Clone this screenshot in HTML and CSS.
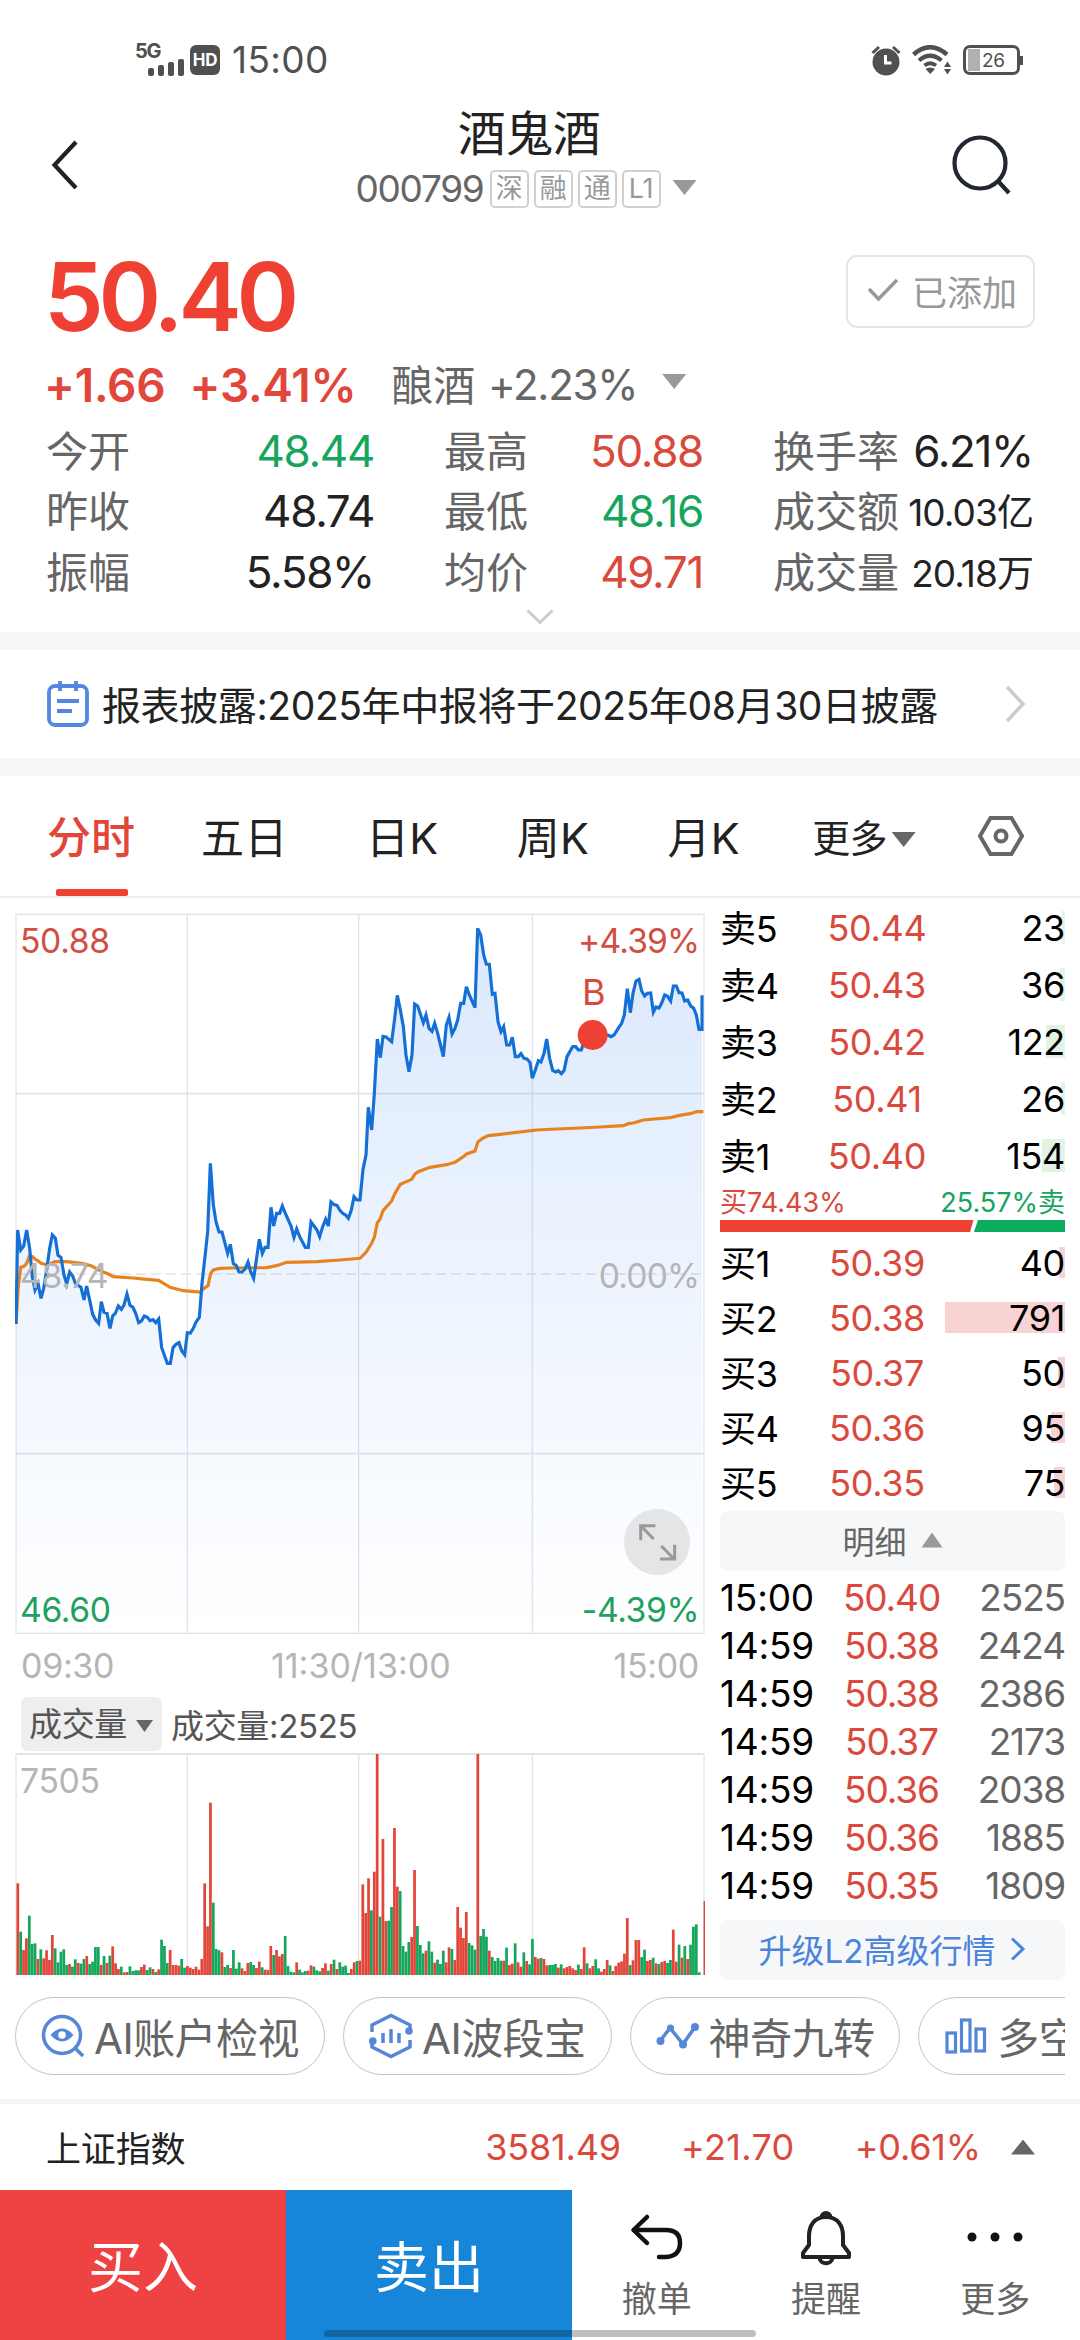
FILE: index.html
```
<!DOCTYPE html>
<html lang="zh-CN">

<head>
    <meta charset="UTF-8" />
    <meta name="viewport" content="width=device-width, initial-scale=1">
    <title>酒鬼酒 000799</title>
    <link rel="stylesheet" href="styles.css">
</head>

<body>
    <div class="status">
        <div class="status-left">
            <div class="signal">
                <span>5G</span>
                <svg width="36" height="17" viewBox="0 0 36 17" fill="#505050">
                    <rect x="0" y="9" width="6" height="8" rx="2" />
                    <rect x="10" y="6" width="6" height="11" rx="2" />
                    <rect x="20" y="3" width="6" height="14" rx="2" />
                    <rect x="30" y="0" width="6" height="17" rx="2" />
                </svg>
            </div>
            <span class="hd">HD</span>
            <span class="clock">15:00</span>
        </div>
        <div class="status-right">
            <svg width="30" height="31" viewBox="0 0 30 31">
                <circle cx="15" cy="17" r="13.5" fill="#505050" />
                <path d="M1.5 8L8 2M28.5 8L22 2" stroke="#505050" stroke-width="3" />
                <path d="M14.500 10v8h6" stroke="#fff" stroke-width="3" fill="none" />
            </svg>
            <svg width="40" height="30" viewBox="0 0 40 30" fill="none" stroke="#505050">
                <path d="M1.500 9.500Q18 -5 35 9.500" stroke-width="4.500" />
                <path d="M7 15.500Q18 6 29.500 15.500" stroke-width="4.200" />
                <path d="M12.500 20.500Q18 16 24 20.500" stroke-width="4" />
                <path d="M13.500 24Q18 21 23 24L18.200 29z" fill="#505050" stroke="none" />
                <path d="M32 22l3.500-5.500L39 22zM32 24l3.500 5.500L39 24z" fill="#505050" stroke="none" />
            </svg>
            <div class="battery"><span>26</span></div>
        </div>
    </div>

    <div class="header">
        <svg width="28" height="52" viewBox="0 0 28 52">
            <path d="M26 3L4.500 26L26 49" fill="none" stroke="#222" stroke-width="4.200" />
        </svg>
        <div class="stock">
            <div class="stock-name">酒鬼酒</div>
            <div class="stock-code">
                <span class="code">000799</span>
                <span class="tag">深</span>
                <span class="tag">融</span>
                <span class="tag">通</span>
                <span class="tag">L1</span>
                <span class="arrow-down"></span>
            </div>
        </div>
        <svg width="62" height="62" viewBox="0 0 62 62" fill="none" stroke="#222831" stroke-width="4.200">
            <circle cx="29" cy="29" r="25.500" />
            <path d="M46.500 46.500L58 59" />
        </svg>
    </div>

    <div class="quote">
        <div class="price-row">
            <div class="price">50.40</div>
            <div class="added">
                <svg width="32" height="24" viewBox="0 0 32 24">
                    <path d="M2 11L11.500 21L30 2" fill="none" stroke="#999" stroke-width="3.500" />
                </svg>
                已添加
            </div>
        </div>
        <div class="change-row">
            <b>+1.66</b>
            <b class="percent">+3.41%</b>
            <span class="sector">酿酒</span>
            <span class="sector-change">+2.23%</span>
            <span class="arrow-down"></span>
        </div>
        <div class="stats">
            <div class="stat"><span>今开</span><em class="green">48.44</em></div>
            <div class="stat"><span>最高</span><em class="red">50.88</em></div>
            <div class="stat"><span>换手率</span><em>6.21%</em></div>
            <div class="stat"><span>昨收</span><em>48.74</em></div>
            <div class="stat"><span>最低</span><em class="green">48.16</em></div>
            <div class="stat"><span>成交额</span><em class="small">10.03亿</em></div>
            <div class="stat"><span>振幅</span><em>5.58%</em></div>
            <div class="stat"><span>均价</span><em class="red">49.71</em></div>
            <div class="stat"><span>成交量</span><em class="small">20.18万</em></div>
        </div>
        <div class="unfold">
            <svg width="28" height="16" viewBox="0 0 28 16">
                <path d="M1.500 1.500L14 13.500L26.500 1.500" fill="none" stroke="#ccc" stroke-width="3" />
            </svg>
        </div>
    </div>

    <div class="notice">
        <svg width="42" height="46" viewBox="0 0 42 46" fill="none" stroke="#5487e0" stroke-width="3.800">
            <rect x="2" y="5" width="38" height="39" rx="6" />
            <path d="M13 0v10M29 0v10M10 20h22M10 30h15" />
        </svg>
        <span>报表披露:2025年中报将于2025年08月30日披露</span>
        <svg width="22" height="38" viewBox="0 0 22 38">
            <path d="M3 2L19 19L3 36" fill="none" stroke="#ccc" stroke-width="3.500" />
        </svg>
    </div>

    <div class="tabs">
        <span class="tab active">分时</span>
        <span class="tab">五日</span>
        <span class="tab">日K</span>
        <span class="tab">周K</span>
        <span class="tab">月K</span>
        <span class="tab more">更多<i class="arrow-down dark"></i></span>
        <svg width="48" height="42" viewBox="0 0 48 42" fill="none" stroke="#666" stroke-width="4">
            <path d="M13.500 3h21L45 21L34.500 39h-21L3 21z" />
            <circle cx="24" cy="21" r="5.500" />
        </svg>
    </div>

    <div class="main">
        <div class="charts">
            <svg class="price-chart" width="690" height="722" viewBox="45 39 2070 2166">
                <defs>
                    <linearGradient id="fade" gradientUnits="userSpaceOnUse" x1="0" y1="80" x2="0" y2="2200">
                        <stop offset="0" stop-color="#2a7df2" stop-opacity="0.17" />
                        <stop offset="0.5" stop-color="#2a7df2" stop-opacity="0.085" />
                        <stop offset="1" stop-color="#2a7df2" stop-opacity="0" />
                    </linearGradient>
                </defs>
                <g stroke="#e3e4e7" stroke-width="4" fill="none">
                    <rect x="48" y="43" width="2064" height="2157" />
                    <path d="M562 43V2200M1076 43V2200M1597 43V2200" />
                    <path d="M48 581H2112M48 1661H2112" stroke-width="5" />
                    <path d="M48 1122H2112" stroke-dasharray="30 15" />
                </g>
                <polygon id="area" fill="url(#fade)" />
                <polyline id="average" fill="none" stroke="#e6831f" stroke-width="9.500" />
                <polyline id="trend" fill="none" stroke="#146fd6" stroke-width="9.500" />
                <g class="chart-text">
                    <text x="60" y="160" fill="#d14f42">50.88</text>
                    <text x="2098" y="160" fill="#d14f42" text-anchor="end" class="narrow">+4.39%</text>
                    <text x="60" y="1165" fill="#b5b5b5">48.74</text>
                    <text x="2098" y="1165" fill="#b5b5b5" text-anchor="end" class="narrow">0.00%</text>
                    <text x="60" y="2167" fill="#21a060">46.60</text>
                    <text x="2098" y="2167" fill="#21a060" text-anchor="end">-4.39%</text>
                    <text x="1781" y="315" fill="#d94a3d" text-anchor="middle" class="mark">B</text>
                </g>
                <circle cx="1778" cy="405" r="45" fill="#ee4033" />
                <circle cx="1971" cy="1926" r="99" fill="#d8d8d8" fill-opacity="0.65" />
                <path d="M1961 1917L1924 1879M1922 1921V1877H1966M1984 1938L2022 1977M2024 1934V1977H1980" fill="none" stroke="#999" stroke-width="9" />
            </svg>
            <div class="times"><span>09:30</span><span class="noon">11:30/13:00</span><span>15:00</span></div>
            <div class="volume-head">
                <span class="select">成交量<i class="arrow-down dark"></i></span>
                <span>成交量:2525</span>
            </div>
            <svg class="volume-chart" width="690" height="223" viewBox="45 39 2070 669">
                <g stroke="#e3e4e7" stroke-width="4" fill="none">
                    <path d="M48 42V705M562 42V705M1076 42V705M1597 42V705M2112 42V705" />
                    <path d="M48 42H2112" stroke-width="6" />
                </g>
                <g id="bars"></g>
                <text class="chart-text" x="60" y="160" fill="#b5b5b5">7505</text>
            </svg>
        </div>

        <div class="book">
            <div class="level ask"><span class="side">卖5</span><span class="level-price">50.44</span><span class="qty">23</span><i style="width: 3px"></i></div>
            <div class="level ask"><span class="side">卖4</span><span class="level-price">50.43</span><span class="qty">36</span><i style="width: 5px"></i></div>
            <div class="level ask"><span class="side">卖3</span><span class="level-price">50.42</span><span class="qty">122</span><i style="width: 19px"></i></div>
            <div class="level ask"><span class="side">卖2</span><span class="level-price">50.41</span><span class="qty">26</span><i style="width: 4px"></i></div>
            <div class="level ask"><span class="side">卖1</span><span class="level-price">50.40</span><span class="qty">154</span><i style="width: 23px"></i></div>
            <div class="ratio"><span class="red">买74.43%</span><span class="green">25.57%卖</span></div>
            <svg class="ratio-bar" width="345" height="12" viewBox="0 0 345 12">
                <path d="M0 0H253.500L250 12H0z" fill="#ee4033" />
                <path d="M258 0H345V12H254z" fill="#0bad5c" />
            </svg>
            <div class="level bid"><span class="side">买1</span><span class="level-price">50.39</span><span class="qty">40</span><i style="width: 6px"></i></div>
            <div class="level bid"><span class="side">买2</span><span class="level-price">50.38</span><span class="qty">791</span><i style="width: 120px"></i></div>
            <div class="level bid"><span class="side">买3</span><span class="level-price">50.37</span><span class="qty">50</span><i style="width: 7px"></i></div>
            <div class="level bid"><span class="side">买4</span><span class="level-price">50.36</span><span class="qty">95</span><i style="width: 14px"></i></div>
            <div class="level bid"><span class="side">买5</span><span class="level-price">50.35</span><span class="qty">75</span><i style="width: 11px"></i></div>
            <div class="book-button">明细<i class="arrow-up light"></i></div>
            <div class="ticks">
                <div class="tick"><span class="tick-time">15:00</span><span class="tick-price">50.40</span><span>2525</span></div>
                <div class="tick"><span class="tick-time">14:59</span><span class="tick-price">50.38</span><span>2424</span></div>
                <div class="tick"><span class="tick-time">14:59</span><span class="tick-price">50.38</span><span>2386</span></div>
                <div class="tick"><span class="tick-time">14:59</span><span class="tick-price">50.37</span><span>2173</span></div>
                <div class="tick"><span class="tick-time">14:59</span><span class="tick-price">50.36</span><span>2038</span></div>
                <div class="tick"><span class="tick-time">14:59</span><span class="tick-price">50.36</span><span>1885</span></div>
                <div class="tick"><span class="tick-time">14:59</span><span class="tick-price">50.35</span><span>1809</span></div>
            </div>
            <div class="book-button upgrade">
                升级L2高级行情
                <svg width="16" height="24" viewBox="0 0 16 24">
                    <path d="M2 1.500L13 12L2 22.500" fill="none" stroke="#4c84dc" stroke-width="3" />
                </svg>
            </div>
        </div>
    </div>

    <div class="tools">
        <div class="tool">
            <svg width="44" height="44" viewBox="0 0 44 44" fill="none" stroke="#5487d8" stroke-width="3.500">
                <circle cx="21" cy="21" r="18.500" />
                <path d="M34 34L42 42" />
                <path d="M9.500 21Q21 8 32.500 21Q21 34 9.500 21z" fill="#5487d8" stroke="none" />
                <circle cx="21" cy="21" r="3.800" fill="#fff" stroke="none" />
            </svg>
            <span>AI账户检视</span>
        </div>
        <div class="tool">
            <svg width="44" height="46" viewBox="0 0 44 46" fill="none" stroke="#5487d8" stroke-width="3.500">
                <path d="M3 19V12L22 2.500L41 12V15M3 31V34L22 43.500L41 34V27" />
                <path d="M14 20v10M22 16v14M30 20v10" />
                <circle cx="3.800" cy="28" r="3.800" fill="#5487d8" stroke="none" />
                <circle cx="40" cy="18" r="3.800" fill="#5487d8" stroke="none" />
            </svg>
            <span>AI波段宝</span>
        </div>
        <div class="tool">
            <svg width="44" height="26" viewBox="0 0 44 26" fill="none" stroke="#5487d8" stroke-width="3.500">
                <path d="M4 18L14 5L27 21L39 4" />
                <g fill="#5487d8" stroke="none">
                    <circle cx="4.500" cy="18" r="4" />
                    <circle cx="14.500" cy="5" r="3.500" />
                    <circle cx="27" cy="21.500" r="4" />
                    <circle cx="39" cy="4" r="4" />
                </g>
            </svg>
            <span>神奇九转</span>
        </div>
        <div class="tool">
            <svg width="44" height="38" viewBox="0 0 44 38" fill="none" stroke="#5487d8" stroke-width="3.200">
                <rect x="3" y="16" width="8.500" height="19" />
                <rect x="17.500" y="3" width="8.500" height="31" />
                <rect x="32" y="12" width="8.500" height="22" />
            </svg>
            <span>多空</span>
        </div>
    </div>

    <div class="index-bar">
        <span class="index-name">上证指数</span>
        <span class="index-value">3581.49</span>
        <span class="index-diff">+21.70</span>
        <span class="index-percent">+0.61%</span>
        <i class="arrow-up"></i>
    </div>

    <div class="actions">
        <div class="trade buy">买入</div>
        <div class="trade sell">卖出</div>
        <div class="action">
            <svg width="54" height="56" viewBox="0 0 54 56" fill="none" stroke="#111" stroke-width="4.500" stroke-linecap="round" stroke-linejoin="round">
                <path d="M17 7L3.500 20L17 33" />
                <path d="M4 20H36Q50 20 50 33T36 47H29" />
            </svg>
            <span>撤单</span>
        </div>
        <div class="action">
            <svg width="54" height="56" viewBox="0 0 54 56" fill="none" stroke="#222" stroke-width="4" stroke-linejoin="round">
                <path d="M27 7C15 7 10 16 10 26V35L4 43V47H50V43L44 35V26C44 16 39 7 27 7z" />
                <path d="M22.500 7.500C22.500 1.500 31.500 1.500 31.500 7.500M20.500 48C21.500 55 32.500 55 33.500 48" />
            </svg>
            <span>提醒</span>
        </div>
        <div class="action">
            <svg width="56" height="56" viewBox="0 0 56 56" fill="#111">
                <circle cx="5" cy="27" r="4.500" />
                <circle cx="28" cy="27" r="4.500" />
                <circle cx="51" cy="27" r="4.500" />
            </svg>
            <span>更多</span>
        </div>
        <div class="home-bar"></div>
    </div>

    <script>
        const trend = "48,1272 53,990 62,1050 71,1038 80,990 89,1045 97,1130 105,1170 114,1150 123,1195 131,1165 140,1110 149,1045 157,1005 166,1015 174,1066 183,1072 192,1125 200,1152 209,1116 218,1128 226,1150 243,1162 252,1200 260,1158 270,1205 278,1243 287,1260 296,1270 304,1205 312,1237 321,1240 330,1285 338,1248 346,1240 355,1218 364,1228 372,1215 381,1182 390,1216 399,1222 407,1240 416,1268 424,1263 433,1248 442,1252 450,1262 459,1259 467,1268 476,1257 485,1343 494,1368 502,1390 511,1390 519,1343 528,1333 537,1328 545,1352 554,1364 562,1298 571,1299 580,1285 588,1266 598,1252 606,1150 615,1070 623,995 631,790 640,915 648,965 657,996 666,996 675,1030 683,1060 691,1033 700,1091 709,1097 717,1116 726,1116 735,1107 744,1086 752,1115 761,1135 769,1080 778,1018 787,1060 795,1042 804,1042 813,922 821,978 830,940 839,940 847,918 856,940 873,978 882,1012 890,987 899,1010 916,1042 925,1042 933,966 942,978 951,990 959,1010 968,980 977,958 985,978 993,906 1002,914 1011,916 1019,930 1028,940 1037,945 1045,955 1054,930 1062,890 1071,900 1080,900 1089,808 1098,765 1105,622 " +
            "1115,690 1123,580 1132,417 1141,473 1149,409 1158,411 1175,425 1184,355 1192,286 1201,330 1210,380 1218,465 1227,515 1236,465 1244,312 1253,318 1270,368 1278,345 1287,385 1296,394 1304,370 1313,400 1330,470 1339,375 1347,352 1356,402 1365,385 1373,360 1382,310 1391,310 1399,260 1408,285 1425,323 1433,85 1442,105 1451,165 1459,192 1468,193 1477,283 1485,280 1494,365 1503,395 1511,380 1520,435 1529,435 1537,412 1546,470 1555,470 1563,461 1572,475 1581,477 1590,487 1597,535 1606,510 1615,482 1623,486 1632,460 1640,417 1649,475 1658,511 1667,516 1675,512 1684,521 1692,512 1701,470 1718,440 1727,440 1735,450 1744,450 1753,420 1778,405 1824,405 1833,410 1842,405 1856,383 1865,370 1873,345 1882,266 1891,338 1899,280 1908,243 1917,238 1925,273 1934,288 1942,280 1952,279 1960,337 1968,321 1977,324 1986,307 1994,285 2003,289 2012,303 2020,258 2029,258 2037,278 2046,279 2054,303 2063,300 2072,318 2081,325 2089,345 2097,388 2106,388 2106,286";
        const average = "48,1272 55,1160 62,1102 71,1100 80,1090 89,1066 97,1070 106,1078 115,1083 123,1090 140,1094 150,1092 165,1085 200,1085 250,1091 275,1098 300,1112 325,1122 340,1130 400,1134 440,1138 476,1141 510,1162 550,1172 600,1176 615,1163 624,1157 632,1120 640,1110 660,1105 690,1104 800,1103 830,1097 860,1087 950,1085 1020,1080 1080,1075 1098,1057 1115,1030 1123,1012 1132,968 1140,958 1149,932 1175,903 1185,880 1201,853 1235,838 1244,823 1255,815 1290,802 1340,794 1365,787 1390,770 1400,762 1425,753 1434,725 1450,714 1465,707 1500,703 1550,697 1610,690 1670,687 1740,684 1800,681 1870,677 1885,671 1900,669 1930,660 2010,653 2035,647 2070,641 2090,635 2110,635";
        // one entry per minute, r = up, g = down
        const volumes = "r275 g130 r75 r110 g178 g93 g95 r48 g77 r50 r74 r45 r120 g80 g38 g70 g77 g30 r33 g25 g47 r36 g34 g48 r57 g33 g40 g84 g84 r30 g57 r36 g58 r86 r35 r18 g25 r8 r9 g26 g12 g14 g14 r24 r31 g15 g23 r18 g9 r17 g106 g87 g36 r75 r30 r30 r28 g48 g22 r27 r22 r18 r25 r16 r48 r275 r146 r517 g217 g78 g74 r68 g24 g30 r21 g75 g19 g38 r20 r12 r36 g39 g30 r21 r40 g23 r16 r15 r87 g60 r75 r56 r63 g117 g27 g10 g8 r38 g16 g8 g12 r13 r29 g25 g14 g11 r21 r35 g13 r33 g46 r18 g38 g25 g28 g6 r18 r38 g42 r43 " +
            "r272 r186 r290 g194 r310 r663 g175 r408 r162 g163 g204 r441 r265 g252 g87 g70 g99 r114 r315 g147 g90 g65 r73 g101 g70 r37 g46 g33 g73 r38 r83 g78 r45 r204 r142 r111 r189 g96 g89 g76 r663 g117 g138 g115 r73 g54 g42 g51 g43 r43 g82 r30 r34 g95 r38 r25 g68 r42 g32 g108 r54 r49 g51 r48 r29 g30 g30 g33 r22 g32 r20 r24 r27 r20 r15 g31 r18 r83 g35 r20 r27 g47 g20 r10 r18 r45 g29 r12 r27 r37 r41 r64 r171 g30 r44 r105 r105 g54 g76 r42 r45 g52 r35 g33 r39 r42 g36 g45 r136 r40 g91 r52 g87 r48 g91 g145 g152 g8 r0 r222";

        document.querySelector("#trend").setAttribute("points", trend);
        document.querySelector("#area").setAttribute("points", trend + " 2106,2200 48,2200");
        document.querySelector("#average").setAttribute("points", average);

        const bars = document.querySelector("#bars");
        volumes.split(" ").forEach(function (item, i) {
            const height = Number(item.slice(1));
            const bar = document.createElementNS("http://www.w3.org/2000/svg", "rect");
            bar.setAttribute("x", 49.3 + i * 8.625);
            bar.setAttribute("y", 705 - height);
            bar.setAttribute("width", 8.2);
            bar.setAttribute("height", height);
            bar.setAttribute("fill", item[0] === "r" ? "#e2463a" : "#14a65b");
            bars.appendChild(bar);
        });
    </script>
</body>

</html>
```
FILE: styles.css
```
* {
    box-sizing: border-box;
}

body {
    margin: 0;
    width: 1080px;
    height: 2340px;
    overflow: hidden;
    background-color: #fff;
    color: #222;
    font-family: Inter, "Noto Sans CJK SC", sans-serif;
    letter-spacing: -0.02em;
    white-space: nowrap;
}

svg {
    display: block;
    flex: none;
}

i,
em {
    font-style: normal;
}

.red {
    color: #d94a3d;
}

.green {
    color: #17a55d;
}

.arrow-down,
.arrow-up {
    display: inline-block;
    width: 24px;
    height: 15px;
    background-color: #999;
    clip-path: polygon(0 0, 100% 0, 50% 100%);
}

.arrow-up {
    background-color: #666;
    clip-path: polygon(50% 0, 100% 100%, 0 100%);
}

.dark {
    background-color: #666;
}

.light {
    background-color: #999;
}

/* status bar */
.status {
    display: flex;
    justify-content: space-between;
    align-items: center;
    height: 100px;
    padding: 20px 60px 0 135px;
    color: #505050;
}

.status-left,
.status-right {
    display: flex;
    align-items: center;
}

.signal {
    width: 49px;
    height: 32px;
}

.signal span {
    display: block;
    height: 15px;
    font-size: 20px;
    line-height: 14px;
    font-weight: 700;
    letter-spacing: -0.06em;
}

.signal svg {
    margin-left: 13px;
}

.hd {
    width: 30px;
    height: 30px;
    margin-left: 6px;
    border-radius: 6px;
    background-color: #505050;
    color: #fff;
    font-size: 17px;
    line-height: 30px;
    font-weight: 700;
    text-align: center;
}

.clock {
    margin-left: 12px;
    font-size: 37px;
    line-height: 40px;
    letter-spacing: 0.01em;
}

.status-right svg {
    margin-right: 11px;
}

.battery {
    position: relative;
    width: 57px;
    height: 30px;
    border: 3px solid #505050;
    border-radius: 7px;
    background: linear-gradient(#b0b0b0, #b0b0b0) 2px 1px / 12px 22px no-repeat;
    font-size: 19px;
    line-height: 25px;
    padding-left: 16px;
}

.battery::after {
    content: "";
    position: absolute;
    right: -6px;
    top: 8px;
    width: 3px;
    height: 9px;
    background-color: #505050;
}

/* header */
.header {
    display: flex;
    justify-content: space-between;
    align-items: center;
    height: 130px;
    padding: 0 67px 0 50px;
}

.stock {
    padding: 0 0 13px 23px;
}

.stock-name {
    padding-left: 6px;
    text-align: center;
    font-size: 48px;
    line-height: 56px;
    letter-spacing: -0.01em;
}

.stock-code {
    display: flex;
    align-items: center;
    gap: 5px;
    height: 46px;
    margin-top: 4px;
}

.code {
    margin-right: 1px;
    color: #666;
    font-size: 37px;
    letter-spacing: -0.035em;
}

.tag {
    width: 39px;
    height: 38px;
    border: 2px solid #d0d0d0;
    border-radius: 5px;
    color: #999;
    font-size: 27px;
    line-height: 34px;
    text-align: center;
}

.stock-code .arrow-down {
    margin: 0 0 2px 7px;
}

/* quote */
.quote {
    height: 402px;
    padding: 7px 46px 0;
}

.price-row {
    display: flex;
    justify-content: space-between;
    align-items: center;
    height: 120px;
}

.price {
    margin-left: -2px;
    color: #ee4033;
    font-size: 95px;
    line-height: 120px;
    font-weight: 600;
    letter-spacing: -0.055em;
}

.added {
    display: flex;
    align-items: center;
    gap: 13px;
    width: 189px;
    height: 73px;
    margin: 0 -1px 12px 0;
    padding: 0 0 2px 19px;
    border: 2px solid #e5e5e5;
    border-radius: 11px;
    color: #999;
    font-size: 35px;
    letter-spacing: 0;
}

.change-row {
    display: flex;
    align-items: center;
    height: 55px;
    color: #666;
    font-size: 42px;
}

.change-row b {
    margin-left: -2px;
    color: #e2463a;
    font-size: 46px;
    font-weight: 600;
    letter-spacing: -0.005em;
}

.change-row .percent {
    margin-left: 24px;
}

.sector {
    margin: -4px 0 0 35px;
}

.sector-change {
    margin-left: 13px;
    letter-spacing: -0.03em;
}

.change-row .arrow-down {
    margin: 0 0 6px 25px;
}

.stats {
    display: grid;
    grid-template-columns: 328px 259px 260px;
    grid-auto-rows: 60.3px;
    column-gap: 70px;
    margin-top: 9px;
}

.stat {
    display: flex;
    justify-content: space-between;
    align-items: center;
    font-size: 44px;
}

.stat span {
    margin-top: -5px;
    color: #666;
    font-size: 42px;
    letter-spacing: 0;
}

.stat em {
    letter-spacing: -0.03em;
}

.stat .small {
    margin-top: -2px;
    font-size: 37px;
    letter-spacing: -0.025em;
}

.unfold {
    display: flex;
    justify-content: center;
    align-items: center;
    height: 30px;
}

.notice {
    display: flex;
    align-items: center;
    height: 144px;
    padding: 0 54px 0 47px;
    border: solid #f5f6f8;
    border-width: 18px 0;
    font-size: 39px;
    letter-spacing: -0.01em;
}

.notice span {
    flex: 1;
    margin: -3px 0 0 13px;
}

/* period tabs */
.tabs {
    display: flex;
    align-items: center;
    height: 122px;
    padding-left: 47px;
    border-bottom: 2px solid #eee;
    font-size: 43px;
    line-height: 124px;
}

.tab {
    height: 120px;
    margin-right: 78px;
    letter-spacing: 0.01em;
}

.active {
    position: relative;
    width: 90px;
    margin-right: 64px;
    color: #e2463a;
    font-size: 44px;
    font-weight: 500;
    letter-spacing: 0;
}

.active::after {
    content: "";
    position: absolute;
    left: 9px;
    bottom: 0;
    width: 72px;
    height: 7px;
    border-radius: 2px;
    background-color: #ee4033;
}

.more {
    margin: 0 61px 0 -6px;
    font-size: 38px;
    letter-spacing: -0.02em;
}

.more .arrow-down {
    margin: 0 0 5px 5px;
}

/* charts and order book */
.main {
    display: flex;
    height: 1083px;
    padding: 15px 15px 0;
}

.charts {
    width: 690px;
}

.chart-text {
    font-size: 101px;
    letter-spacing: -0.01em;
}

.narrow {
    letter-spacing: -0.025em;
}

.mark {
    font-size: 108px;
}

.times {
    display: flex;
    justify-content: space-between;
    padding: 11px 6px 0;
    color: #b5b5b5;
    font-size: 34px;
    line-height: 40px;
}

.noon {
    margin-right: 6px;
    letter-spacing: 0;
}

.volume-head {
    display: flex;
    align-items: center;
    gap: 9px;
    height: 54px;
    margin: 11px 0 2px 6px;
    color: #555;
    font-size: 33px;
    letter-spacing: -0.01em;
}

.select {
    width: 141px;
    padding-left: 8px;
    border-radius: 7px;
    background-color: #eee;
    line-height: 54px;
}

.select .arrow-down {
    width: 17px;
    height: 12px;
    margin: 0 0 4px 9px;
}

.book {
    width: 345px;
    margin: -14px 0 0 15px;
    color: #000;
    font-size: 36px;
}

.level {
    position: relative;
    display: grid;
    grid-template-columns: 96px 122px 127px;
    align-items: center;
    height: 57px;
}

.bid {
    height: 55px;
}

.side {
    margin-top: -3px;
}

.level-price,
.tick-price {
    color: #d94a3d;
    text-align: center;
}

.qty {
    text-align: right;
}

/* order size behind the number */
.level i {
    position: absolute;
    z-index: -1;
    right: 0;
    height: 33px;
    background-color: #e2f3e4;
}

.bid i {
    height: 31px;
    background-color: #f8d3d3;
}

.ratio {
    display: flex;
    justify-content: space-between;
    height: 36px;
    font-size: 27px;
    line-height: 37px;
    letter-spacing: 0;
}

.ratio-bar {
    margin-bottom: 3px;
}

.book-button {
    display: flex;
    justify-content: center;
    align-items: center;
    gap: 15px;
    height: 60px;
    margin-top: 1px;
    padding-bottom: 2px;
    border-radius: 8px;
    background-color: #f6f7f9;
    color: #666;
    font-size: 32px;
    letter-spacing: 0;
}

.book-button .arrow-up {
    width: 21px;
}

.ticks {
    padding: 3px 0 9px;
}

.tick {
    display: grid;
    grid-template-columns: 96px 1fr 98px;
    align-items: center;
    height: 48px;
    font-size: 37px;
    line-height: 48px;
    letter-spacing: -0.03em;
}

.tick-time {
    letter-spacing: -0.005em;
}

.tick span:last-child {
    color: #666;
    text-align: right;
}

.upgrade {
    color: #4c84dc;
    font-size: 33px;
}

/* tool chips */
.tools {
    display: flex;
    gap: 18px;
    height: 118px;
    margin: 0 15px;
    padding: 16px 0 24px;
    overflow: hidden;
}

.tool {
    display: flex;
    flex: none;
    align-items: center;
    gap: 9px;
    padding: 0 25px;
    border: 1px solid #c4c4c4;
    border-radius: 39px;
    color: #666;
    font-size: 42px;
    letter-spacing: -0.013em;
}

.tool span {
    margin-top: -2px;
}

/* bottom */
.index-bar {
    display: flex;
    align-items: center;
    height: 91px;
    padding: 0 45px 0 46px;
    border-top: 5px solid #f4f5f7;
    color: #d94a3d;
    font-size: 36px;
    letter-spacing: -0.005em;
}

.index-name {
    flex: 1;
    margin-top: -2px;
    color: #222;
    font-size: 35px;
}

.index-diff,
.index-percent {
    margin-left: 60px;
}

.index-diff {
    letter-spacing: 0.01em;
}

.index-bar .arrow-up {
    margin-left: 30px;
}

.actions {
    position: relative;
    display: flex;
    height: 150px;
}

.trade {
    width: 286px;
    color: #fff;
    font-size: 55px;
    line-height: 155px;
    text-align: center;
    letter-spacing: 0;
}

.buy {
    background-color: #ee4243;
}

.sell {
    background-color: #1886d8;
}

.action {
    display: flex;
    flex: 1;
    flex-direction: column;
    align-items: center;
    padding-top: 20px;
    color: #666;
    font-size: 35px;
    line-height: 40px;
    letter-spacing: 0;
}

.action span {
    margin-top: 13px;
}

.home-bar {
    position: absolute;
    left: 324px;
    bottom: 3px;
    width: 432px;
    height: 7px;
    border-radius: 4px;
    background-color: rgba(0, 0, 0, 0.25);
}
```
